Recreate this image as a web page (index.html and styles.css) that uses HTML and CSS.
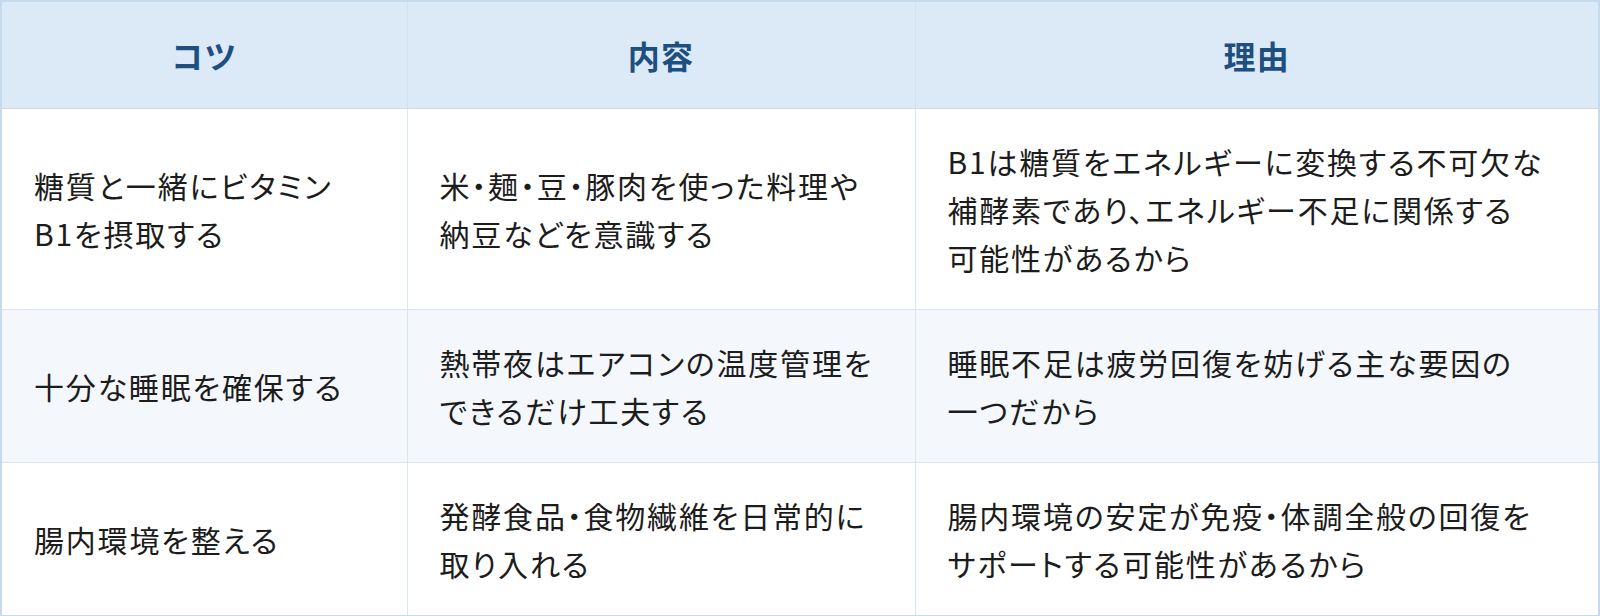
FILE: index.html
```html
<!DOCTYPE html>
<html lang="ja">
<head>
<meta charset="utf-8">
<title>コツ</title>
<link rel="stylesheet" href="styles.css">
</head>
<body>
<table class="tips">
  <colgroup>
    <col class="c1">
    <col class="c2">
    <col class="c3">
  </colgroup>
  <thead>
    <tr>
      <th>コツ</th>
      <th>内容</th>
      <th>理由</th>
    </tr>
  </thead>
  <tbody>
    <tr>
      <td>糖質と一緒にビタミン<br>B1を摂取する</td>
      <td>米・麺・豆・豚肉を使った料理や<br>納豆などを意識する</td>
      <td>B1は糖質をエネルギーに変換する不可欠な<br>補酵素であり、エネルギー不足に関係する<br>可能性があるから</td>
    </tr>
    <tr class="alt">
      <td>十分な睡眠を確保する</td>
      <td>熱帯夜はエアコンの温度管理を<br>できるだけ工夫する</td>
      <td>睡眠不足は疲労回復を妨げる主な要因の<br>一つだから</td>
    </tr>
    <tr>
      <td>腸内環境を整える</td>
      <td>発酵食品・食物繊維を日常的に<br>取り入れる</td>
      <td>腸内環境の安定が免疫・体調全般の回復を<br>サポートする可能性があるから</td>
    </tr>
  </tbody>
</table>
</body>
</html>
```

FILE: styles.css
```css
html, body {
  margin: 0;
  padding: 0;
  background: #ffffff;
}

.tips {
  width: 1600px;
  border-collapse: collapse;
  border: 2px solid #c6daee;
  font-family: "Noto Sans CJK JP", "Noto Sans", sans-serif;
  color: #1c1c1c;
  table-layout: fixed;
}

.c1 { width: 406px; }
.c2 { width: 508px; }
.c3 { width: auto; }

.tips th {
  background: #dce9f7;
  color: #1d4f80;
  font-size: 32px;
  font-weight: 700;
  line-height: 48px;
  padding: 29px 32px;
  text-align: center;
  border: 1px solid #d3e2f1;
  border-bottom: 1px solid #c9dcef;
  letter-spacing: 0.04em;
}

.tips td {
  font-size: 30px;
  line-height: 48px;
  padding: 28px 32px;
  text-align: left;
  vertical-align: middle;
  border: 1px solid #d8e5f2;
  letter-spacing: 0.06em;
  font-feature-settings: "palt";
  white-space: nowrap;
}

.tips tr.alt td {
  background: #f4f8fc;
}
```
